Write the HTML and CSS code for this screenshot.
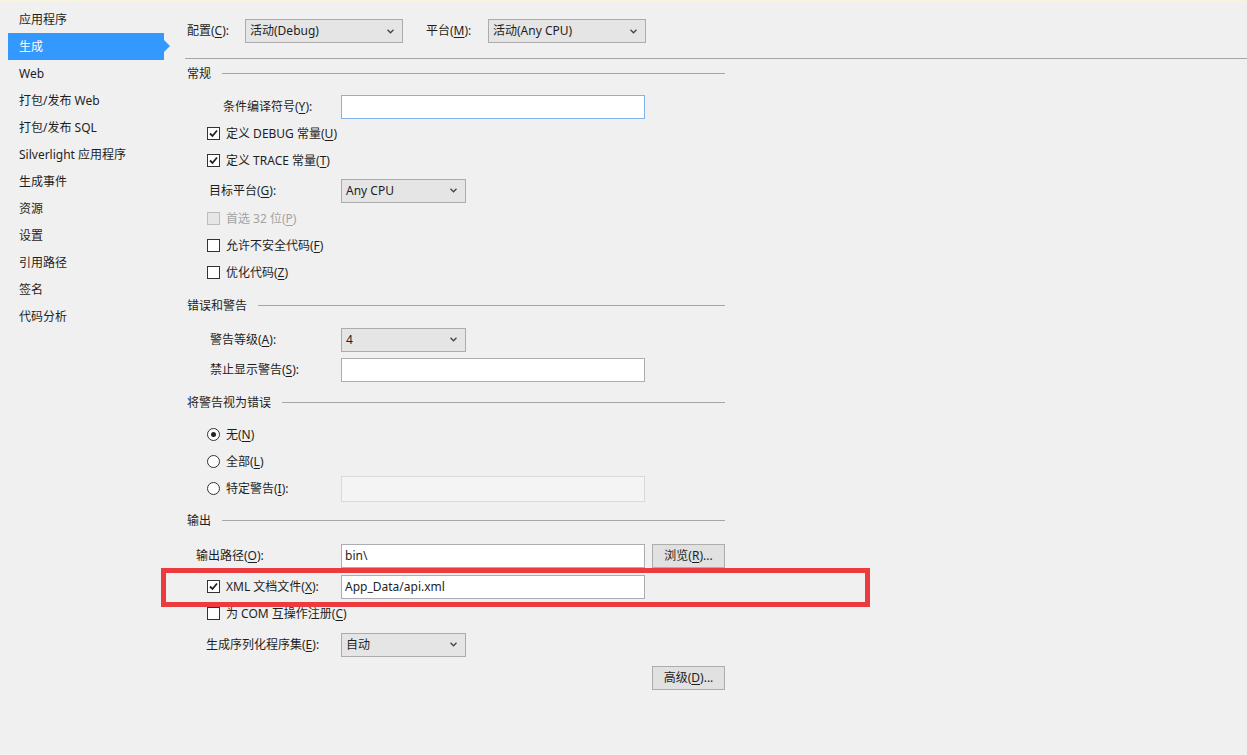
FILE: index.html
```html
<!DOCTYPE html>
<html lang="zh-CN">
<head>
<meta charset="utf-8">
<title>生成</title>
<link rel="stylesheet" href="styles.css">
</head>
<body>
<div class="page">
  <nav class="sidebar">
    <div class="nav-item">应用程序</div>
    <div class="nav-item active">生成</div>
    <div class="nav-item">Web</div>
    <div class="nav-item">打包/发布 Web</div>
    <div class="nav-item">打包/发布 SQL</div>
    <div class="nav-item">Silverlight 应用程序</div>
    <div class="nav-item">生成事件</div>
    <div class="nav-item">资源</div>
    <div class="nav-item">设置</div>
    <div class="nav-item">引用路径</div>
    <div class="nav-item">签名</div>
    <div class="nav-item">代码分析</div>
  </nav>

  <main class="main">
    <div class="toolbar">
      <span class="tb-label">配置(<u>C</u>):</span>
      <div class="select wide"><span>活动(Debug)</span><svg class="chev" viewBox="0 0 7 5" width="7" height="5"><path d="M0.5 0.8 L3.5 3.8 L6.5 0.8" fill="none" stroke="#444" stroke-width="1.3"/></svg></div>
      <span class="tb-label plat">平台(<u>M</u>):</span>
      <div class="select wide"><span>活动(Any CPU)</span><svg class="chev" viewBox="0 0 7 5" width="7" height="5"><path d="M0.5 0.8 L3.5 3.8 L6.5 0.8" fill="none" stroke="#444" stroke-width="1.3"/></svg></div>
    </div>
    <div class="divider"></div>

    <div class="form">
      <div class="row head sp-1"><span>常规</span><i class="rule"></i></div>

      <div class="row sp-6">
        <label class="lbl ind-36">条件编译符号(<u>Y</u>):</label>
        <div class="input focus"></div>
      </div>
      <div class="row check-row">
        <span class="box checked"><svg viewBox="0 0 11 11" width="11" height="11"><path d="M2 5.5 L4.5 8 L9 2.5" fill="none" stroke="#222" stroke-width="1.8"/></svg></span>
        <span>定义 DEBUG 常量(<u>U</u>)</span>
      </div>
      <div class="row check-row">
        <span class="box checked"><svg viewBox="0 0 11 11" width="11" height="11"><path d="M2 5.5 L4.5 8 L9 2.5" fill="none" stroke="#222" stroke-width="1.8"/></svg></span>
        <span>定义 TRACE 常量(<u>T</u>)</span>
      </div>
      <div class="row sp-3">
        <label class="lbl ind-22">目标平台(<u>G</u>):</label>
        <div class="select narrow"><span>Any CPU</span><svg class="chev" viewBox="0 0 7 5" width="7" height="5"><path d="M0.5 0.8 L3.5 3.8 L6.5 0.8" fill="none" stroke="#444" stroke-width="1.3"/></svg></div>
      </div>
      <div class="row check-row disabled sp-1">
        <span class="box"></span>
        <span>首选 32 位(<u>P</u>)</span>
      </div>
      <div class="row check-row">
        <span class="box"></span>
        <span>允许不安全代码(<u>F</u>)</span>
      </div>
      <div class="row check-row">
        <span class="box"></span>
        <span>优化代码(<u>Z</u>)</span>
      </div>

      <div class="row head sp-6"><span>错误和警告</span><i class="rule"></i></div>
      <div class="row sp-7">
        <label class="lbl ind-23">警告等级(<u>A</u>):</label>
        <div class="select narrow"><span>4</span><svg class="chev" viewBox="0 0 7 5" width="7" height="5"><path d="M0.5 0.8 L3.5 3.8 L6.5 0.8" fill="none" stroke="#444" stroke-width="1.3"/></svg></div>
      </div>
      <div class="row sp-3">
        <label class="lbl ind-23">禁止显示警告(<u>S</u>):</label>
        <div class="input"></div>
      </div>

      <div class="row head sp-6"><span>将警告视为错误</span><i class="rule"></i></div>
      <div class="row check-row sp-5">
        <span class="radio on"></span>
        <span>无(<u>N</u>)</span>
      </div>
      <div class="row check-row">
        <span class="radio"></span>
        <span>全部(<u>L</u>)</span>
      </div>
      <div class="row">
        <label class="lbl ind-20 inline"><span class="radio"></span><span>特定警告(<u>I</u>):</span></label>
        <div class="input off"></div>
      </div>

      <div class="row head sp-5"><span>输出</span><i class="rule"></i></div>
      <div class="row sp-8">
        <label class="lbl ind-9">输出路径(<u>O</u>):</label>
        <div class="input"><span>bin\</span></div>
        <button class="btn">浏览(<u>R</u>)...</button>
      </div>
      <div class="row sp-4 marked">
        <label class="lbl ind-20 inline"><span class="box checked"><svg viewBox="0 0 11 11" width="11" height="11"><path d="M2 5.5 L4.5 8 L9 2.5" fill="none" stroke="#222" stroke-width="1.8"/></svg></span><span>XML 文档文件(<u>X</u>):</span></label>
        <div class="input"><span>App_Data/api.xml</span></div>
        <div class="highlight"></div>
      </div>
      <div class="row check-row">
        <span class="box"></span>
        <span>为 COM 互操作注册(<u>C</u>)</span>
      </div>
      <div class="row sp-4">
        <label class="lbl ind-19">生成序列化程序集(<u>E</u>):</label>
        <div class="select narrow"><span>自动</span><svg class="chev" viewBox="0 0 7 5" width="7" height="5"><path d="M0.5 0.8 L3.5 3.8 L6.5 0.8" fill="none" stroke="#444" stroke-width="1.3"/></svg></div>
      </div>
      <div class="row end sp-6">
        <button class="btn">高级(<u>D</u>)...</button>
      </div>
    </div>
  </main>
</div>
</body>
</html>
```

FILE: styles.css
```css
* { box-sizing: border-box; }

html, body {
  margin: 0;
  padding: 0;
  background: #f0f0f0;
}

body {
  font-family: "Noto Sans", "Noto Sans CJK SC", sans-serif;
  font-size: 12px;
  line-height: 16px;
  color: #1e1e1e;
}

u { text-decoration: underline; text-underline-offset: 2px; }

.page {
  display: flex;
  min-height: 755px;
  border-top: 2px solid #f8f4dc;
}

/* ---------- sidebar ---------- */
.sidebar {
  width: 178px;
  flex: none;
  padding-top: 4px;
}

.nav-item {
  position: relative;
  height: 27px;
  margin-left: 8px;
  width: 156px;
  padding-left: 11px;
  display: flex;
  align-items: center;
  white-space: nowrap;
}

.nav-item.active {
  background: #3399ff;
  color: #fff;
}

.nav-item.active::after {
  content: "";
  position: absolute;
  right: -6px;
  top: 7px;
  border-left: 6px solid #3399ff;
  border-top: 6px solid transparent;
  border-bottom: 6px solid transparent;
}

/* ---------- main ---------- */
.main {
  flex: 1;
  padding-left: 9px;
}

.toolbar {
  display: flex;
  align-items: center;
  height: 24px;
  margin-top: 17px;
}

.tb-label {
  width: 58px;
  white-space: nowrap;
}

.tb-label.plat {
  width: 62px;
  margin-left: 23px;
}

.divider {
  margin-top: 15px;
  margin-left: -2px;
  height: 1px;
  background: #a6a6a6;
}

.form {
  width: 538px;
}

.row {
  position: relative;
  height: 27px;
  display: flex;
  align-items: center;
  white-space: nowrap;
}

.sp-1 { margin-top: 1px; }
.sp-3 { margin-top: 3px; }
.sp-4 { margin-top: 4px; }
.sp-5 { margin-top: 5px; }
.sp-6 { margin-top: 6px; }
.sp-7 { margin-top: 7px; }
.sp-8 { margin-top: 8px; }

.row.head .rule {
  flex: 1;
  height: 1px;
  background: #a6a6a6;
  margin-left: 11px;
}

.row.end { justify-content: flex-end; }

.lbl {
  width: 154px;
  flex: none;
  display: flex;
  align-items: center;
}

.ind-9 { padding-left: 9px; }
.ind-19 { padding-left: 19px; }
.ind-20 { padding-left: 20px; }
.ind-22 { padding-left: 22px; }
.ind-23 { padding-left: 23px; }
.ind-36 { padding-left: 36px; }

.check-row { padding-left: 20px; }

.box, .radio {
  width: 13px;
  height: 13px;
  flex: none;
  margin-right: 6px;
  background: #fff;
  border: 1px solid #333;
  display: flex;
  align-items: center;
  justify-content: center;
}

.radio { border-radius: 50%; }

.radio.on::after {
  content: "";
  width: 5px;
  height: 5px;
  border-radius: 50%;
  background: #222;
}

.disabled { color: #a3a3a3; }
.disabled .box {
  background: #e6e6e6;
  border-color: #bcbcbc;
}

/* ---------- controls ---------- */
.input {
  width: 304px;
  height: 24px;
  background: #fff;
  border: 1px solid #abadb3;
  display: flex;
  align-items: center;
  padding-left: 3px;
}

.input.focus { border-color: #7eb4ea; }

.input.off {
  background: #f4f4f4;
  border-color: #d9d9d9;
  height: 26px;
}

.select {
  height: 24px;
  background: #e5e5e5;
  border: 1px solid #acacac;
  display: flex;
  align-items: center;
  justify-content: space-between;
  padding: 0 8px 0 4px;
}

.select.wide { width: 158px; }
.select.narrow { width: 125px; }

.btn {
  font: inherit;
  color: #1e1e1e;
  height: 24px;
  width: 73px;
  margin-left: 7px;
  padding: 0;
  background: #e1e1e1;
  border: 1px solid #adadad;
}

.row.end .btn { margin-left: 0; }

.highlight {
  position: absolute;
  left: -26px;
  top: -5px;
  width: 709px;
  height: 39px;
  border: 5px solid #ec3b3e;
  pointer-events: none;
}
```
